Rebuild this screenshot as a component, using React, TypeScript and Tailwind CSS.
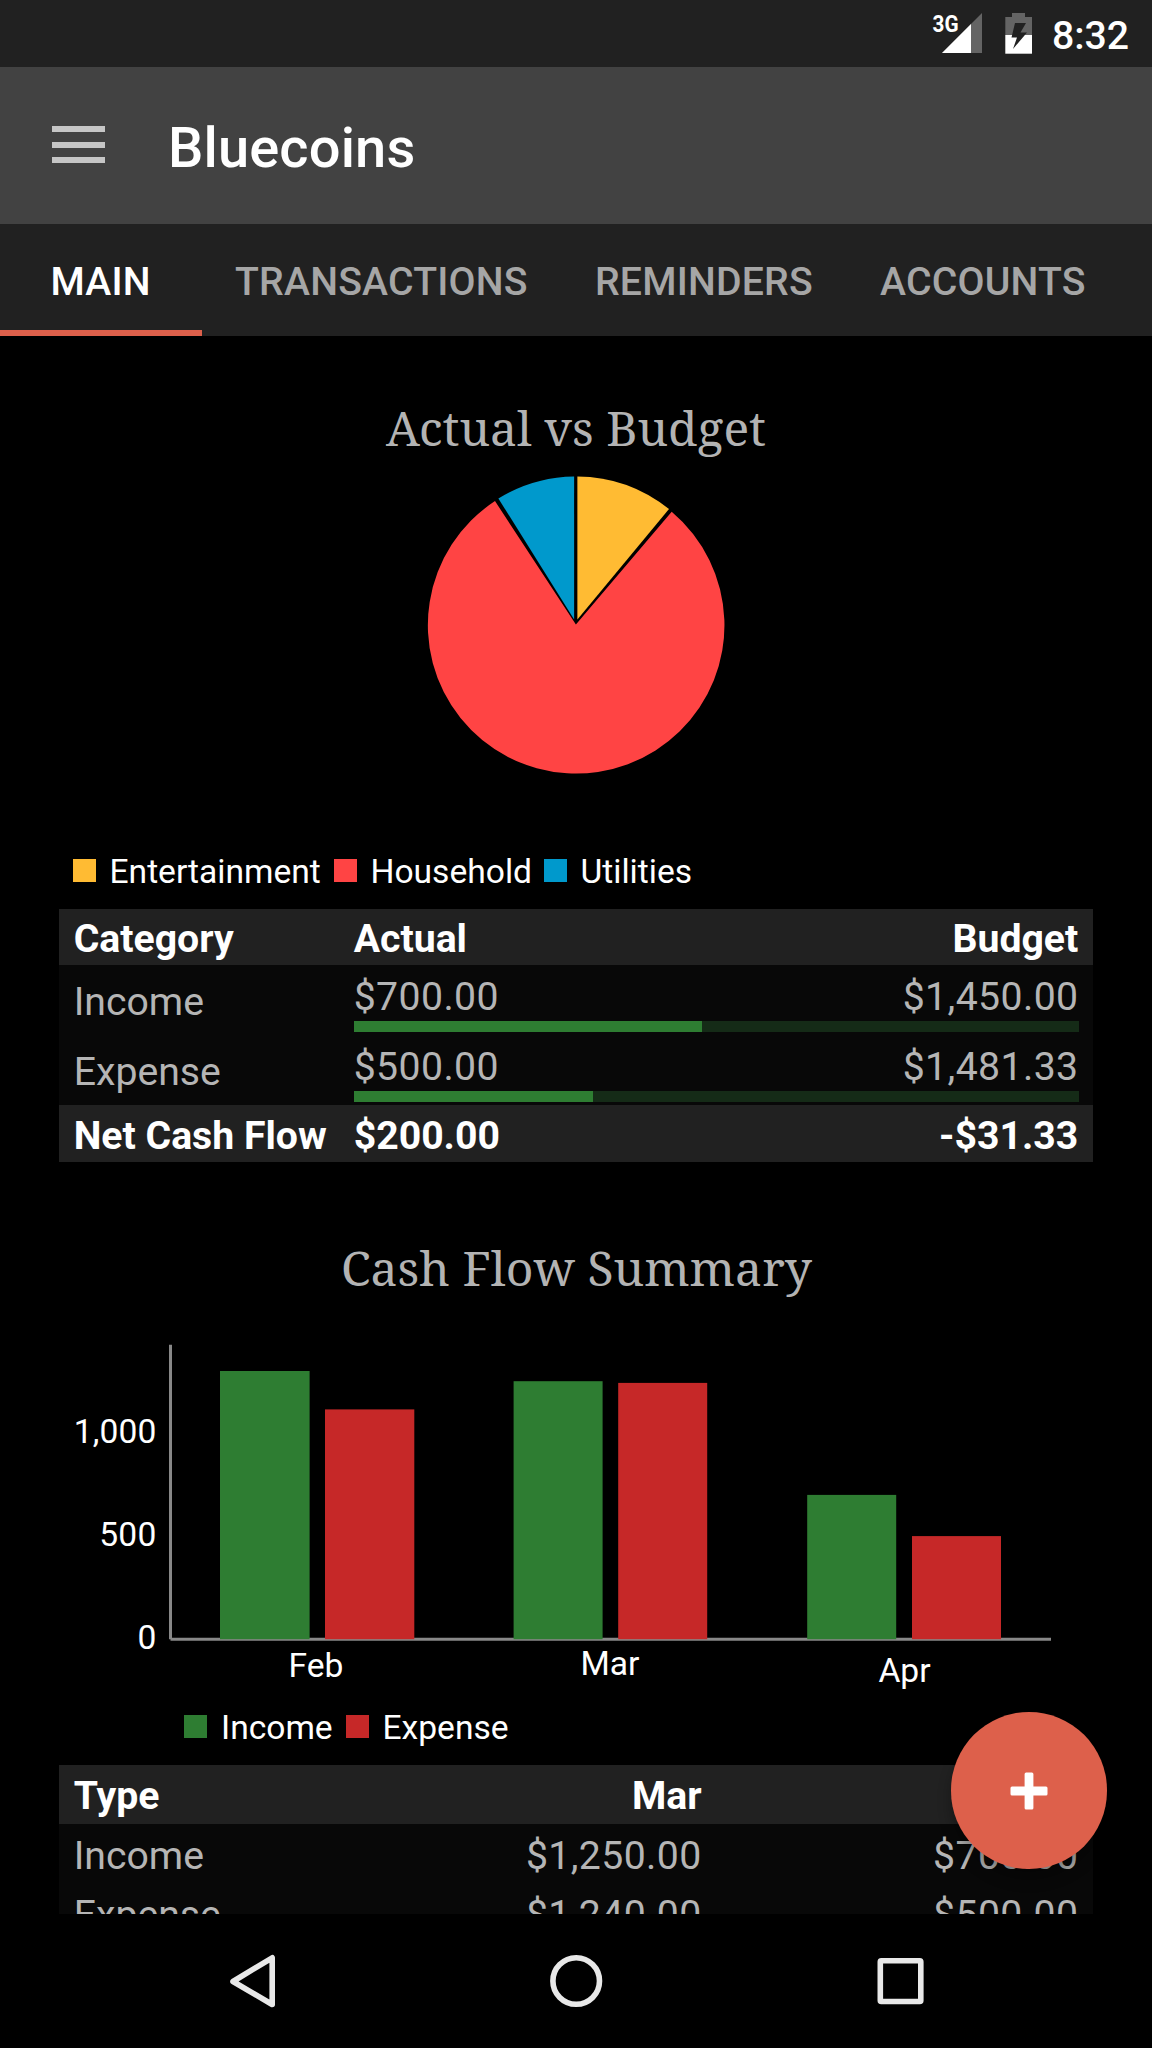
import React from "react";

const tabs = [
  { label: "MAIN", box: "w-[202px] pl-[50.5px]", active: true },
  { label: "TRANSACTIONS", box: "w-[359px] pl-[33px]", active: false },
  { label: "REMINDERS", box: "w-[286px] pl-[34px]", active: false },
  { label: "ACCOUNTS", box: "w-[305px] pl-[33px]", active: false },
];

function StatusBar() {
  return (
    <div className="flex h-[67px] shrink-0 justify-end bg-[#212121]">
      <svg width="200" height="67" viewBox="952 0 200 67" className="overflow-visible">
        <text x="932.5" y="31.5" fontSize="23" fontWeight="700" fill="#fff" textLength="26" lengthAdjust="spacingAndGlyphs">3G</text>
        <path d="M982 13V53H942Z" fill="#646464" />
        <path d="M971 24V53H942Z" fill="#fff" />
        <path d="M1005.3 17H1012V13H1025V17H1032V35H1005.3Z" fill="#646464" />
        <path d="M1005.3 35H1032V53.7H1005.3Z" fill="#fff" />
        <path d="M1015 23H1026L1020.5 32.5H1027L1013 49L1017 37.5H1011.5Z" fill="#212121" />
        <text x="1052" y="49" fontSize="39.2" fontWeight="500" fill="#fff" textLength="77">8:32</text>
      </svg>
    </div>
  );
}

function AppBar() {
  return (
    <header className="flex h-[157px] shrink-0 bg-[#424242]">
      <div className="ml-[52px] mt-[59px] flex h-[37px] w-[53px] flex-col justify-between">
        <div className="h-[6px] bg-[#c6c6c6]" />
        <div className="h-[6px] bg-[#c6c6c6]" />
        <div className="h-[6px] bg-[#c6c6c6]" />
      </div>
      <h1 className="ml-[63px] mt-[48px] text-[56px] leading-[66px] font-medium tracking-[0.15px] text-white">Bluecoins</h1>
    </header>
  );
}

function Tabs() {
  return (
    <nav className="flex h-[112px] shrink-0 bg-[#212121]">
      {tabs.map((t) => (
        <div
          key={t.label}
          className={`flex flex-col justify-between pt-[35px] ${t.box} ${t.active ? "text-white" : "text-[#a6a6a6]"}`}
        >
          <span className="text-[39.2px] leading-[46px] font-medium tracking-[0.2px] whitespace-nowrap">{t.label}</span>
          {t.active && <div className="-ml-[50.5px] h-[6px] bg-[#dd604b]" />}
        </div>
      ))}
    </nav>
  );
}

function Heading({ children, width, className }: { children: string; width: number; className: string }) {
  return (
    <h2 className={`flex justify-center ${className}`}>
      <svg width={width} height="60" className="overflow-visible" role="img" aria-label={children}>
        <text
          x="0"
          y="46.4"
          textLength={width}
          lengthAdjust="spacingAndGlyphs"
          fontSize="47.5"
          fill="#b3b3b3"
          fontFamily='"Noto Serif", "Droid Serif", "DejaVu Serif Condensed", "DejaVu Serif", serif'
        >
          {children}
        </text>
      </svg>
    </h2>
  );
}

function Pie() {
  return (
    <svg width="298" height="298" viewBox="427.3 476.2 298 298" className="mx-auto mt-[16px] block">
      <path d="M576.2 624.8L672 512A148.3 148.3 0 1 1 495.3 501.3Z" fill="#ff4444" />
      <path d="M577.7 619.7V476.7A148.3 148.3 0 0 1 669.3 509.3Z" fill="#ffbb33" />
      <path d="M574.4 619.7V476.7A148.3 148.3 0 0 0 498.7 498.7Z" fill="#0099cc" />
    </svg>
  );
}

function Legend({ color, label, box }: { color: string; label: string; box: string }) {
  return (
    <div className={`flex ${box}`}>
      <div className={`mt-[7px] h-[23px] w-[23px] ${color}`} />
      <span className="ml-[14px] text-[33.6px] leading-[40px] whitespace-nowrap text-white">{label}</span>
    </div>
  );
}

function BudgetRow({ name, actual, budget, percent }: { name: string; actual: string; budget: string; percent: number }) {
  return (
    <div className="flex h-[70px]">
      <div className="w-[294.7px] pt-[14px] pl-[14.7px]">{name}</div>
      <div className="mr-[14.5px] flex-1 pt-[9px]">
        <div className="flex h-[47px] justify-between tracking-[0.4px]">
          <span>{actual}</span>
          <span>{budget}</span>
        </div>
        <div className="h-[11px] bg-[#152b17]">
          <div className="h-full bg-[#2e7d32]" style={{ width: `${percent}%` }} />
        </div>
      </div>
    </div>
  );
}

function BudgetTable() {
  return (
    <div className="mx-[59px] mt-[19px] bg-[#080808] text-[39.2px] leading-[46px] text-[#b5b5b5]">
      <div className="flex h-[56px] bg-[#212121] pt-[7px] pr-[14.7px] pl-[14.7px] font-bold text-white">
        <span className="w-[280px]">Category</span>
        <span className="flex-1">Actual</span>
        <span>Budget</span>
      </div>
      <BudgetRow name="Income" actual="$700.00" budget="$1,450.00" percent={48} />
      <BudgetRow name="Expense" actual="$500.00" budget="$1,481.33" percent={33} />
      <div className="flex h-[57px] bg-[#212121] pt-[8px] pr-[14.7px] pl-[14.7px] font-bold text-white">
        <span className="w-[280px]">Net Cash Flow</span>
        <span className="flex-1">$200.00</span>
        <span>-$31.33</span>
      </div>
    </div>
  );
}

function CashFlowChart() {
  const bars = [
    { x: 220, top: 1371, w: 89.6, fill: "#2e7d32" },
    { x: 325, top: 1409.4, w: 89.3, fill: "#c62828" },
    { x: 513.6, top: 1381.2, w: 89, fill: "#2e7d32" },
    { x: 618.2, top: 1382.9, w: 89, fill: "#c62828" },
    { x: 807.2, top: 1494.9, w: 89, fill: "#2e7d32" },
    { x: 912, top: 1536.1, w: 89, fill: "#c62828" },
  ];
  return (
    <svg width="1034" height="356" viewBox="59 1335 1034 356" className="mx-auto mt-[35px] block">
      <path d="M170.5 1344.8V1639.2M170.5 1639.2H1051" stroke="#888" strokeWidth="3" fill="none" />
      {bars.map((b) => (
        <rect key={b.x} x={b.x} y={b.top} width={b.w} height={1639.2 - b.top} fill={b.fill} />
      ))}
      <g fill="#fff" fontSize="33.6">
        <text x="156.3" y="1442.5" textAnchor="end" textLength="82.5">1,000</text>
        <text x="156.3" y="1545.5" textAnchor="end" textLength="57">500</text>
        <text x="156.3" y="1649" textAnchor="end">0</text>
        <text x="316" y="1677" textAnchor="middle">Feb</text>
        <text x="610" y="1675" textAnchor="middle">Mar</text>
        <text x="904.5" y="1681.5" textAnchor="middle">Apr</text>
      </g>
    </svg>
  );
}

function SummaryTable() {
  return (
    <div className="mx-[59px] mt-[17px] bg-[#080808] text-[39.2px] leading-[46px] text-[#b5b5b5]">
      <div className="flex h-[59px] bg-[#212121] pt-[8px] pr-[14.7px] pl-[14.7px] font-bold text-white">
        <span className="w-[268px]">Type</span>
        <span className="w-[360px] text-right">Mar</span>
        <span className="flex-1 text-right">Apr</span>
      </div>
      <div className="flex h-[59px] pt-[9px] pr-[14.7px] pl-[14.7px]">
        <span className="w-[268px]">Income</span>
        <span className="w-[360px] text-right tracking-[0.4px]">$1,250.00</span>
        <span className="flex-1 text-right tracking-[0.4px]">$700.00</span>
      </div>
      <div className="flex h-[59px] pt-[9px] pr-[14.7px] pl-[14.7px]">
        <span className="w-[268px]">Expense</span>
        <span className="w-[360px] text-right tracking-[0.4px]">$1,240.00</span>
        <span className="flex-1 text-right tracking-[0.4px]">$500.00</span>
      </div>
    </div>
  );
}

function NavBar() {
  return (
    <footer className="h-[134px] shrink-0 bg-black">
      <svg width="1152" height="134" viewBox="0 1914 1152 134" fill="none" stroke="#e8e8e8" strokeWidth="5.6" strokeLinejoin="round">
        <path d="M233 1981.5L272.2 1957.8V2004.5Z" />
        <circle cx="576.2" cy="1981" r="23.3" />
        <rect x="880.3" y="1960.8" width="40.5" height="40.7" rx="1" />
      </svg>
    </footer>
  );
}

export default function App() {
  return (
    <div className="relative flex h-[2048px] w-[1152px] flex-col overflow-hidden bg-black font-['Roboto',sans-serif]">
      <StatusBar />
      <AppBar />
      <Tabs />
      <main className="h-[1578px] shrink-0 overflow-hidden">
        <Heading width={380} className="mt-[64px] h-[60px]">Actual vs Budget</Heading>
        <Pie />
        <div className="mt-[78px] ml-[72.5px] flex h-[38px]">
          <Legend color="bg-[#ffbb33]" label="Entertainment" box="w-[261px]" />
          <Legend color="bg-[#ff4444]" label="Household" box="w-[210px]" />
          <Legend color="bg-[#0099cc]" label="Utilities" box="w-[200px]" />
        </div>
        <BudgetTable />
        <Heading width={471} className="mt-[78px] h-[60px]">Cash Flow Summary</Heading>
        <CashFlowChart />
        <div className="mt-[17px] ml-[184px] flex h-[40px]">
          <Legend color="bg-[#2e7d32]" label="Income" box="w-[161.5px]" />
          <Legend color="bg-[#c62828]" label="Expense" box="w-[200px]" />
        </div>
        <SummaryTable />
      </main>
      <NavBar />
      <button
        aria-label="Add"
        className="absolute top-[1712px] left-[950.5px] flex h-[157px] w-[156.6px] items-center justify-center rounded-full bg-[#dd604b] shadow-[0_10px_14px_rgba(0,0,0,0.3)]"
      >
        <svg width="38" height="38" viewBox="0 0 38 38" fill="#fff">
          <rect x="14.6" y="0.5" width="8.8" height="37" rx="1.5" />
          <rect x="0.5" y="14.6" width="37" height="8.8" rx="1.5" />
        </svg>
      </button>
    </div>
  );
}
